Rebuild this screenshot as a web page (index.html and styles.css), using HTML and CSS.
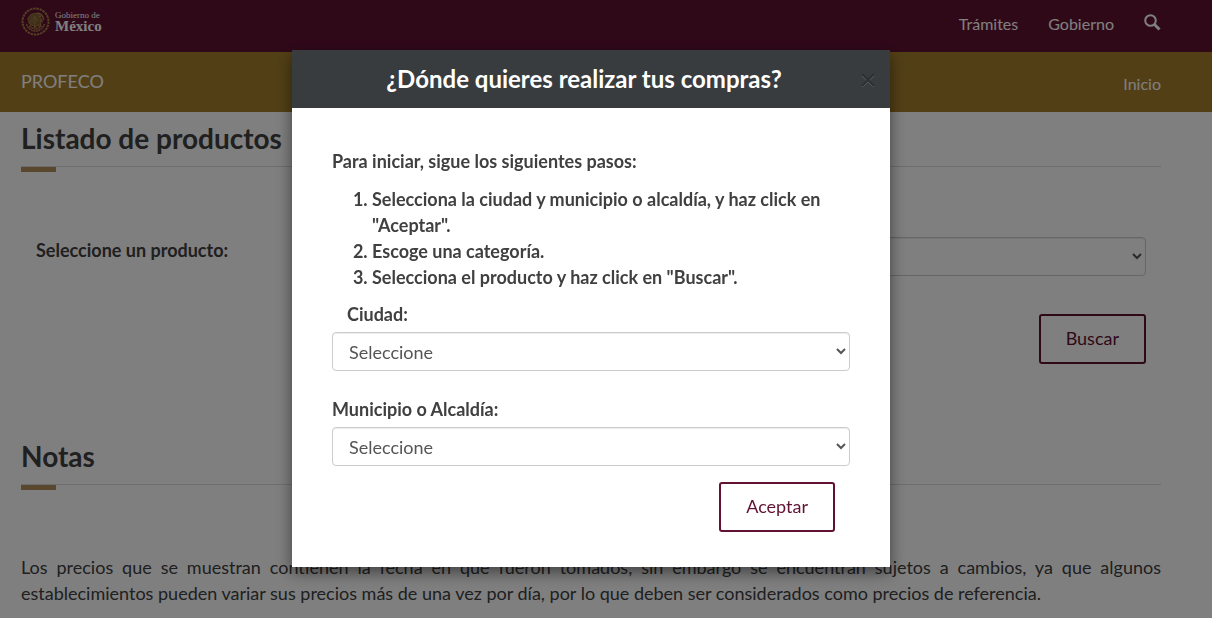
FILE: index.html
```html
<!DOCTYPE html>
<html lang="es">
<head>
    <meta charset="UTF-8">
    <meta name="viewport" content="width=device-width, initial-scale=1.0">
    <title>PROFECO - Listado de productos</title>
    <link rel="stylesheet" href="styles.css">
</head>
<body>

    <!-- Barra de gobierno -->
    <header class="gob-bar">
        <div class="container bar-row">
            <a href="#" class="logo">
                <svg class="seal" viewBox="0 0 58 58" fill="none" stroke="#a57f45">
                    <circle cx="29" cy="29" r="26" stroke-width="4" stroke-dasharray="5 1.5"/>
                    <path d="M14 24c2-8 9-12 16-11 5 0 9 3 10 7l-4-1c3 3 6 6 7 11l-4-3c1 5 1 9-2 13l-2-5c-2 4-5 6-9 6l2-4c-6 1-11-2-13-7l4 1c-3-2-5-4-5-7z" fill="#7d5c34" stroke-width="2"/>
                    <path d="M20 20l12 10M24 17l11 9M19 26l11 8M30 18c-3 1-4 3-3 6l4 3" stroke-width="2"/>
                    <path d="M11 34c3 9 10 14 18 14s15-5 18-14M17 37c4 5 8 7 12 7s8-2 12-7" stroke-width="3" stroke-dasharray="4 1"/>
                    <path d="M32 12c8 1 13 6 13 14" stroke-width="3"/>
                </svg>
                <span class="logo-text">
                    <span class="logo-small">Gobierno de</span>
                    <span class="logo-big">México</span>
                </span>
            </a>
            <nav class="gob-nav">
                <a href="#">Trámites</a>
                <a href="#">Gobierno</a>
                <a href="#" class="search" aria-label="Buscar">
                    <svg viewBox="0 0 17 17" fill="none" stroke="#fff">
                        <circle cx="6.5" cy="6.5" r="5.3" stroke-width="2"/>
                        <path d="M10.5 10.5l5 5" stroke-width="3"/>
                    </svg>
                </a>
            </nav>
        </div>
    </header>

    <!-- Submenu -->
    <div class="sub-bar">
        <div class="container bar-row">
            <a href="#" class="brand">PROFECO</a>
            <a href="#" class="home">Inicio</a>
        </div>
    </div>

    <main class="page">
        <div class="container">
            <h2 class="section-title">Listado de productos</h2>

            <form class="product-form">
                <div class="product-row">
                    <label for="producto">Seleccione un producto:</label>
                    <select id="producto" class="form-control"></select>
                </div>
                <div class="actions">
                    <button type="button" class="btn">Buscar</button>
                </div>
            </form>

            <h2 class="section-title">Notas</h2>
            <p class="notes">Los precios que se muestran contienen la fecha en que fueron tomados, sin embargo se encuentran sujetos a cambios, ya que algunos establecimientos pueden variar sus precios más de una vez por día, por lo que deben ser considerados como precios de referencia.</p>
        </div>
    </main>

    <!-- Modal ciudad / municipio -->
    <div class="backdrop">
        <div class="modal" role="dialog" aria-labelledby="modal-title">
            <div class="modal-header">
                <h4 id="modal-title">¿Dónde quieres realizar tus compras?</h4>
                <button type="button" class="close" aria-label="Cerrar">
                    <svg viewBox="0 0 14 14" fill="none" stroke-width="2">
                        <path d="M1 2l12 12M13 2l-12 12" stroke="#5b5e60"/>
                        <path d="M1 1l12 12M13 1l-12 12" stroke="#2d3032"/>
                    </svg>
                </button>
            </div>
            <div class="modal-body">
                <p>Para iniciar, sigue los siguientes pasos:</p>
                <ol>
                    <li>Selecciona la ciudad y municipio o alcaldía, y haz click en "Aceptar".</li>
                    <li>Escoge una categoría.</li>
                    <li>Selecciona el producto y haz click en "Buscar".</li>
                </ol>
                <div class="form-group">
                    <label for="ciudad" class="indent">Ciudad:</label>
                    <select id="ciudad" class="form-control">
                        <option>Seleccione</option>
                    </select>
                </div>
                <div class="form-group">
                    <label for="municipio">Municipio o Alcaldía:</label>
                    <select id="municipio" class="form-control">
                        <option>Seleccione</option>
                    </select>
                </div>
                <div class="actions">
                    <button type="button" class="btn">Aceptar</button>
                </div>
            </div>
        </div>
    </div>

</body>
</html>
```
FILE: styles.css
```css
* {
    box-sizing: border-box;
}

body {
    margin: 0;
    font-family: Lato, "Open Sans", sans-serif;
    font-size: 18px;
    line-height: 26px;
    color: #404041;
    background-color: #fff;
    overflow: hidden;
}

a {
    color: #fff;
    text-decoration: none;
}

.container {
    max-width: 1140px;
    margin: 0 auto;
}

/* Top bars */
.gob-bar,
.sub-bar,
.page {
    padding: 0 30px 0 0;
}

.gob-bar {
    background-color: #611232;
}

.sub-bar {
    background-color: #a57f2c;
}

.bar-row {
    display: flex;
    justify-content: space-between;
    align-items: center;
}

.gob-bar .bar-row {
    height: 52px;
    padding-bottom: 5px;
}

.sub-bar .bar-row {
    height: 60px;
    padding-bottom: 2px;
}

.logo {
    display: flex;
    align-items: center;
    gap: 5px;
    padding-bottom: 4px;
}

.seal {
    width: 29px;
    height: 29px;
}

.logo-text {
    display: flex;
    flex-direction: column;
    font-family: "Liberation Serif", serif;
}

.logo-small {
    font-size: 9px;
    line-height: 10px;
}

.logo-big {
    font-size: 15px;
    font-weight: bold;
    line-height: 16px;
    margin-top: -2px;
}

.gob-nav {
    display: flex;
    align-items: center;
    gap: 30px;
    font-size: 16px;
}

.search {
    display: flex;
    padding-bottom: 2px;
}

.search svg {
    width: 17px;
    height: 17px;
}

.brand {
    font-size: 18px;
}

.home {
    font-size: 16px;
    padding-top: 6px;
}

/* Page content */
.section-title {
    position: relative;
    margin: 0;
    padding: 9px 0 11px;
    font-size: 28px;
    line-height: 34px;
    font-weight: bold;
    border-bottom: 1px solid #ddd;
}

.section-title::after {
    content: "";
    position: absolute;
    left: 0;
    top: 100%;
    width: 35px;
    height: 5px;
    margin-top: 1px;
    background-color: #b38e5d;
}

.product-form {
    padding: 70px 15px 66px;
}

.product-row {
    display: grid;
    grid-template-columns: 1fr 3fr;
    align-items: start;
}

.product-form .actions {
    padding: 38px 0 0;
}

.notes {
    margin: 69px 0 0;
    text-align: justify;
}

label {
    font-weight: bold;
}

.form-control {
    display: block;
    width: 100%;
    height: 39px;
    padding: 6px 12px;
    font: inherit;
    color: #555;
    background-color: #fff;
    border: 1px solid #ccc;
    border-radius: 4px;
    box-shadow: inset 0 1px 1px rgba(0, 0, 0, 0.075);
}

.actions {
    display: flex;
    justify-content: flex-end;
}

.btn {
    height: 50px;
    padding: 0 25px 2px;
    font: inherit;
    color: #611232;
    background-color: transparent;
    border: 2px solid #611232;
    border-radius: 3px;
    cursor: pointer;
}

/* Modal */
.backdrop {
    position: fixed;
    inset: 0;
    padding: 50px 30px 0 0;
    background-color: rgba(0, 0, 0, 0.5);
}

.modal {
    max-width: 598px;
    margin: 0 auto;
    background-color: #fff;
    box-shadow: 0 5px 15px rgba(0, 0, 0, 0.5);
}

.modal-header {
    display: grid;
    grid-template-columns: 1fr auto;
    align-items: center;
    height: 58px;
    padding: 0 15px;
    background-color: #393c3e;
}

.modal-header h4 {
    margin: 0;
    font-size: 24px;
    color: #fff;
    text-align: center;
}

.close {
    display: flex;
    padding: 2px 0 0;
    border: 0;
    background: none;
    cursor: pointer;
}

.close svg {
    width: 14px;
    height: 14px;
}

.modal-body {
    padding: 40px 40px 35px;
}

.modal-body p {
    margin: 0 0 12px;
    font-weight: bold;
}

.modal-body ol {
    margin: 0 0 11px;
    padding-left: 40px;
    font-weight: bold;
}

.form-group {
    margin-bottom: 25px;
}

.form-group label {
    display: block;
    margin-bottom: 5px;
}

.form-group .indent {
    padding-left: 15px;
}

.modal-body .actions {
    margin-top: -9px;
    padding-right: 15px;
}
```
